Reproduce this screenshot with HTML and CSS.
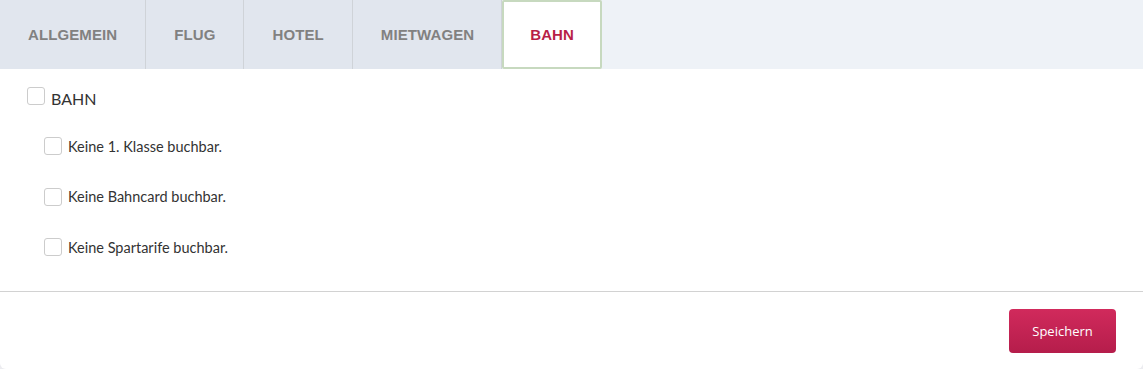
FILE: index.html
```html
<!DOCTYPE html>
<html>
  <head>
    <title>Reiserichtlinie</title>
    <link rel="stylesheet" href="styles.css">
  </head>
  <body>
    <div class="panel">
      <ul class="tabs">
        <li class="tab">Allgemein</li>
        <li class="tab">Flug</li>
        <li class="tab">Hotel</li>
        <li class="tab">Mietwagen</li>
        <li class="tab active">Bahn</li>
      </ul>

      <div class="content">
        <label class="main-option">
          <span class="box"></span>
          <span class="main-text">BAHN</span>
        </label>
        <ul class="options">
          <li><span class="box"></span> Keine 1. Klasse buchbar.</li>
          <li><span class="box"></span> Keine Bahncard buchbar.</li>
          <li><span class="box"></span> Keine Spartarife buchbar.</li>
        </ul>
      </div>

      <div class="footer">
        <button class="save">Speichern</button>
      </div>
    </div>
  </body>
</html>
```

FILE: styles.css
```css
body {
  margin: 0;
  background-color: #ececf0;
  font-family: "Source Sans Pro", Lato, sans-serif;
  color: #333;
}
.panel {
  background-color: #fff;
  width: 1143px;
  height: 369px;
  border-radius: 0 0 6px 6px;
}
.tabs {
  display: flex;
  margin: 0;
  padding: 0;
  list-style-type: none;
  height: 69px;
  background-color: #eef2f7;
}
.tab {
  display: flex;
  align-items: center;
  padding: 0 28px;
  background-color: #e1e6ee;
  border-right: 1px solid #cfd3d8;
  font-family: "Liberation Sans", Arial, sans-serif;
  font-weight: bold;
  font-size: 15px;
  letter-spacing: 0.1px;
  text-transform: uppercase;
  color: #818181;
}
.tab:nth-child(4) {
  padding-right: 27px;
}
.tab.active {
  padding: 0 26px;
  background-color: #fff;
  border: 2px solid #c7d9bf;
  border-radius: 2px;
  color: #b81f47;
}
.content {
  padding: 18px 27px 0;
  height: 204px;
  border-bottom: 1px solid #d2d2d2;
}
.box {
  display: inline-block;
  box-sizing: border-box;
  flex-shrink: 0;
  width: 18px;
  height: 18px;
  border: 1px solid #cccccc;
  border-radius: 3px;
  background-color: #fff;
}
.main-option {
  display: flex;
  gap: 6px;
  font-size: 16px;
  color: #333;
}
.main-text {
  margin-top: 3px;
  line-height: 18px;
}
.options {
  margin: 0;
  padding: 0 0 0 17px;
  list-style-type: none;
}
.options li {
  display: flex;
  align-items: center;
  gap: 6px;
  height: 18px;
  margin-top: 32.5px;
  font-size: 14.5px;
  color: #333;
}
.options li:first-child {
  margin-top: 29px;
}
.footer {
  display: flex;
  justify-content: flex-end;
  padding: 17px 27px 0;
}
.save {
  width: 107px;
  height: 44px;
  border: none;
  border-radius: 4px;
  background: linear-gradient(#d12a5c, #b51d4b);
  color: #fff;
  font-family: "Open Sans", sans-serif;
  font-size: 13px;
  cursor: pointer;
}
```
